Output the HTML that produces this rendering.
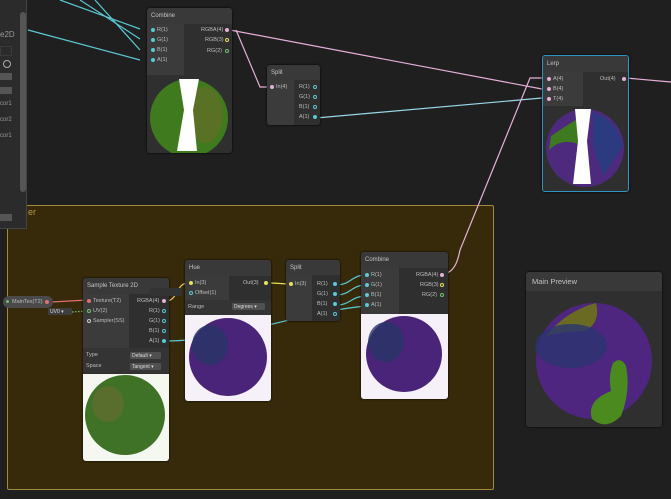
<!DOCTYPE html>
<html><head><meta charset="utf-8"><style>
*{margin:0;padding:0;box-sizing:border-box}
body{width:671px;height:499px;background:#1f1f1f;position:relative;overflow:hidden;font-family:"Liberation Sans",sans-serif;color:#c8c8c8;font-size:6px}
.a{position:absolute}
.node{position:absolute;background:#2f2f2f;border-radius:3px;overflow:hidden;box-shadow:0 0 2px #000}
.hd{position:absolute;left:0;right:0;top:0;background:#393939;color:#c4c4c4;font-size:6px;padding:5px 0 0 4px}
.lc{position:absolute;background:#3b3b3b}
.t{position:absolute;font-size:5.5px;color:#bdbdbd;white-space:nowrap}
.d{position:absolute;width:4px;height:4px;border-radius:50%}
.o{position:absolute;width:4px;height:4px;border-radius:50%;border:1px solid}
.dd{position:absolute;background:#505050;border-radius:1px;font-size:5px;color:#ddd;padding:1px 2px;height:7px}
</style></head><body>
<!-- group -->
<div class="a" style="left:7px;top:205px;width:487px;height:285px;background:#372a0a;border:1px solid #a08a3c;border-radius:2px"></div>
<div class="a" style="left:28px;top:207px;font-size:9px;color:#b89a3a">er</div>
<!-- left panel -->
<div class="a" style="left:0;top:0;width:27px;height:229px;background:#2b2b2b;border-right:1px solid #444;border-bottom:1px solid #444"></div>
<div class="a" style="left:20px;top:12px;width:6px;height:180px;background:#555;border-radius:3px"></div>
<div class="a" style="left:0;top:30px;font-size:8px;color:#999">e2D</div>
<div class="a" style="left:0;top:46px;width:12px;height:10px;border:1px solid #3a3a3a"></div>
<div class="a" style="left:3px;top:60px;width:8px;height:8px;border:1px solid #aaa;border-radius:50%"></div>
<div class="a" style="left:0;top:73px;width:12px;height:7px;background:#555"></div>
<div class="a" style="left:0;top:87px;width:12px;height:7px;background:#555"></div>
<div class="a" style="left:0;top:101px;font-size:6px;color:#999">cor1</div>
<div class="a" style="left:0;top:117px;font-size:6px;color:#999">cor2</div>
<div class="a" style="left:0;top:133px;font-size:6px;color:#999">cor1</div>
<div class="a" style="left:0;top:214px;width:12px;height:7px;background:#555"></div>

<svg class="a" style="left:0;top:0" width="671" height="499">
<g fill="none" stroke-width="1.2">
<path d="M60 0 L140 29" stroke="#5cc8d2"/>
<path d="M80 0 L140 39" stroke="#5cc8d2"/>
<path d="M95 0 L140 50" stroke="#5cc8d2"/>
<path d="M28 30 L140 60" stroke="#5cc8d2"/>
<path d="M230 30 L542 89" stroke="#e6b0d8"/>
<path d="M236 30 L260 87 L270 87" stroke="#e6b0d8"/>
<path d="M316 118 L542 98" stroke="#9ad6e8"/>
<path d="M447 273 C455 270 458 260 460 250 L530 78 L542 78" stroke="#e6b0d8"/>
<path d="M626 78 L671 82" stroke="#e6b0d8"/>
<path d="M52 302 L87 300" stroke="#e07070"/>
<path d="M72 312 L87 311" stroke="#6cc070" stroke-dasharray="1.5 1.5"/>
<path d="M166 301 C178 301 176 283 188 283" stroke="#e8c860"/>
<path d="M166 341 C230 341 300 312 366 306" stroke="#5cc8d2"/>
<path d="M268 283 C280 283 280 284 291 284" stroke="#e8e060"/>
<path d="M337 285 C350 285 352 275 366 275" stroke="#5cc8d2"/>
<path d="M337 295 C350 295 352 285 366 285" stroke="#5cc8d2"/>
<path d="M337 305 C350 305 352 296 366 296" stroke="#5cc8d2"/>
</g>
</svg>

<!-- Combine top -->
<div class="node" style="left:147px;top:8px;width:85px;height:145px">
<div class="hd" style="height:16px">Combine</div>
<div class="lc" style="left:0;top:16px;width:37px;height:51px"></div>
<div class="d" style="left:4px;top:20px;background:#5cc8d2"></div><div class="t" style="left:10px;top:19px">R(1)</div>
<div class="d" style="left:4px;top:30px;background:#5cc8d2"></div><div class="t" style="left:10px;top:29px">G(1)</div>
<div class="d" style="left:4px;top:40px;background:#5cc8d2"></div><div class="t" style="left:10px;top:39px">B(1)</div>
<div class="d" style="left:4px;top:50px;background:#5cc8d2"></div><div class="t" style="left:10px;top:49px">A(1)</div>
<div class="t" style="left:54px;top:19px">RGBA(4)</div><div class="d" style="left:78px;top:20px;background:#e6b0d8"></div>
<div class="t" style="left:58px;top:29px">RGB(3)</div><div class="o" style="left:78px;top:30px;border-color:#e8e060"></div>
<div class="t" style="left:60px;top:40px">RG(2)</div><div class="o" style="left:78px;top:41px;border-color:#6cc070"></div>
<svg class="a" style="left:0;top:67px" width="85" height="78"><circle cx="42" cy="43" r="39" fill="#3f7a1f"/><ellipse cx="58" cy="40" rx="18" ry="28" fill="#6a6a2a" opacity=".6"/><path d="M32 4 L52 4 L46 35 L50 76 L30 76 L37 35 Z" fill="#fff"/></svg>
</div>

<!-- Split top -->
<div class="node" style="left:267px;top:65px;width:53px;height:60px">
<div class="hd" style="height:15px">Split</div>
<div class="lc" style="left:0;top:15px;width:27px;height:45px"></div>
<div class="d" style="left:3px;top:20px;background:#e6b0d8"></div><div class="t" style="left:9px;top:19px">In(4)</div>
<div class="t" style="left:32px;top:19px">R(1)</div><div class="o" style="left:46px;top:20px;border-color:#5cc8d2"></div>
<div class="t" style="left:32px;top:29px">G(1)</div><div class="o" style="left:46px;top:30px;border-color:#5cc8d2"></div>
<div class="t" style="left:32px;top:39px">B(1)</div><div class="o" style="left:46px;top:40px;border-color:#5cc8d2"></div>
<div class="t" style="left:32px;top:49px">A(1)</div><div class="d" style="left:46px;top:50px;background:#5cc8d2"></div>
</div>

<!-- Lerp -->
<div class="node" style="left:542px;top:55px;width:87px;height:137px;border:1px solid #2d94c4">
<div class="hd" style="height:16px">Lerp</div>
<div class="lc" style="left:0;top:16px;width:40px;height:34px"></div>
<div class="d" style="left:4px;top:21px;background:#e6b0d8"></div><div class="t" style="left:10px;top:20px">A(4)</div>
<div class="d" style="left:4px;top:31px;background:#e6b0d8"></div><div class="t" style="left:10px;top:30px">B(4)</div>
<div class="d" style="left:4px;top:41px;background:#e6b0d8"></div><div class="t" style="left:10px;top:40px">T(4)</div>
<div class="t" style="left:57px;top:20px">Out(4)</div><div class="d" style="left:79px;top:21px;background:#e6b0d8"></div>
<svg class="a" style="left:0;top:50px" width="87" height="87"><circle cx="42" cy="42" r="39" fill="#4e2a7e"/><path d="M8 30 Q30 15 40 10 L40 40 Q20 30 6 44Z" fill="#3d7a20"/><path d="M50 6 Q75 15 80 40 L60 70 L50 40Z" fill="#2c3a80"/><path d="M32 3 L48 3 L44 35 L48 78 L30 78 L35 35Z" fill="#fff"/></svg>
</div>

<!-- MainTex pill -->
<div class="a" style="left:3px;top:296px;width:50px;height:12px;background:#4a4a4a;border-radius:6px"></div>
<div class="d" style="left:6px;top:300px;width:3px;height:3px;background:#6cc070"></div>
<div class="t" style="left:12px;top:299px">MainTex(T2)</div>
<div class="d" style="left:45px;top:300px;background:#e07070"></div>
<div class="dd" style="left:48px;top:308px;width:24px;background:#3e3e3e">UV0 ▾</div>

<!-- Sample Texture 2D -->
<div class="node" style="left:83px;top:278px;width:86px;height:183px">
<div class="hd" style="height:16px">Sample Texture 2D</div>
<div class="lc" style="left:0;top:16px;width:46px;height:54px"></div>
<div class="d" style="left:4px;top:21px;background:#e07070"></div><div class="t" style="left:10px;top:20px">Texture(T2)</div>
<div class="o" style="left:4px;top:31px;border-color:#6cc070"></div><div class="t" style="left:10px;top:30px">UV(2)</div>
<div class="o" style="left:4px;top:41px;border-color:#ccc"></div><div class="t" style="left:10px;top:40px">Sampler(SS)</div>
<div class="t" style="left:54px;top:20px">RGBA(4)</div><div class="d" style="left:79px;top:21px;background:#e6b0d8"></div>
<div class="t" style="left:66px;top:30px">R(1)</div><div class="o" style="left:79px;top:31px;border-color:#5cc8d2"></div>
<div class="t" style="left:66px;top:40px">G(1)</div><div class="o" style="left:79px;top:41px;border-color:#5cc8d2"></div>
<div class="t" style="left:66px;top:50px">B(1)</div><div class="o" style="left:79px;top:51px;border-color:#5cc8d2"></div>
<div class="t" style="left:66px;top:60px">A(1)</div><div class="d" style="left:79px;top:61px;background:#5cc8d2"></div>
<div class="a" style="left:0;top:70px;width:86px;height:25px;background:#343434"></div>
<div class="t" style="left:3px;top:74px">Type</div><div class="dd" style="left:47px;top:74px;width:31px">Default ▾</div>
<div class="t" style="left:3px;top:85px">Space</div><div class="dd" style="left:47px;top:85px;width:31px">Tangent ▾</div>
<svg class="a" style="left:0;top:96px" width="86" height="87"><rect width="86" height="87" fill="#f4f8f0"/><circle cx="42" cy="41" r="40" fill="#3f7226"/><ellipse cx="25" cy="30" rx="16" ry="18" fill="#6b6a30" opacity=".6"/></svg>
</div>

<!-- Hue -->
<div class="a" style="left:150px;top:288px;width:32px;height:8px;background:#333"></div>
<div class="node" style="left:185px;top:260px;width:86px;height:141px">
<div class="hd" style="height:16px">Hue</div>
<div class="lc" style="left:0;top:16px;width:44px;height:24px"></div>
<div class="d" style="left:4px;top:21px;background:#e8e060"></div><div class="t" style="left:10px;top:20px">In(3)</div>
<div class="o" style="left:4px;top:31px;border-color:#5cc8d2"></div><div class="t" style="left:10px;top:30px">Offset(1)</div>
<div class="t" style="left:58px;top:20px">Out(3)</div><div class="d" style="left:79px;top:21px;background:#e8e060"></div>
<div class="a" style="left:0;top:40px;width:86px;height:15px;background:#343434"></div>
<div class="t" style="left:3px;top:44px">Range</div><div class="dd" style="left:47px;top:43px;width:33px">Degrees ▾</div>
<svg class="a" style="left:0;top:55px" width="86" height="86"><rect width="86" height="86" fill="#f6f0f8"/><circle cx="43" cy="42" r="39" fill="#4a2478"/><ellipse cx="25" cy="30" rx="18" ry="20" fill="#283468" opacity=".8"/></svg>
</div>

<!-- Split bottom -->
<div class="node" style="left:286px;top:260px;width:54px;height:61px">
<div class="hd" style="height:15px">Split</div>
<div class="lc" style="left:0;top:15px;width:26px;height:46px"></div>
<div class="d" style="left:3px;top:22px;background:#e8e060"></div><div class="t" style="left:9px;top:21px">In(3)</div>
<div class="t" style="left:31px;top:21px">R(1)</div><div class="d" style="left:47px;top:22px;background:#5cc8d2"></div>
<div class="t" style="left:31px;top:31px">G(1)</div><div class="d" style="left:47px;top:32px;background:#5cc8d2"></div>
<div class="t" style="left:31px;top:41px">B(1)</div><div class="d" style="left:47px;top:42px;background:#5cc8d2"></div>
<div class="t" style="left:31px;top:51px">A(1)</div><div class="o" style="left:47px;top:52px;border-color:#5cc8d2"></div>
</div>

<!-- Combine bottom -->
<div class="node" style="left:361px;top:252px;width:87px;height:147px">
<div class="hd" style="height:16px">Combine</div>
<div class="lc" style="left:0;top:16px;width:38px;height:46px"></div>
<div class="d" style="left:4px;top:21px;background:#5cc8d2"></div><div class="t" style="left:10px;top:20px">R(1)</div>
<div class="d" style="left:4px;top:31px;background:#5cc8d2"></div><div class="t" style="left:10px;top:30px">G(1)</div>
<div class="d" style="left:4px;top:41px;background:#5cc8d2"></div><div class="t" style="left:10px;top:40px">B(1)</div>
<div class="d" style="left:4px;top:51px;background:#5cc8d2"></div><div class="t" style="left:10px;top:50px">A(1)</div>
<div class="t" style="left:55px;top:20px">RGBA(4)</div><div class="d" style="left:79px;top:21px;background:#e6b0d8"></div>
<div class="t" style="left:59px;top:30px">RGB(3)</div><div class="o" style="left:79px;top:31px;border-color:#e8e060"></div>
<div class="t" style="left:61px;top:40px">RG(2)</div><div class="o" style="left:79px;top:41px;border-color:#6cc070"></div>
<svg class="a" style="left:0;top:62px" width="87" height="85"><rect width="87" height="85" fill="#f6f0f8"/><circle cx="43" cy="40" r="38" fill="#4a2478"/><ellipse cx="25" cy="28" rx="18" ry="20" fill="#283468" opacity=".8"/></svg>
</div>

<!-- Main Preview -->
<div class="node" style="left:526px;top:272px;width:136px;height:155px;background:#2f2f2f">
<div class="a" style="left:0;top:0;width:136px;height:19px;background:#393939;color:#c4c4c4;font-size:7.5px;padding:5px 0 0 6px">Main Preview</div>
<svg class="a" style="left:0;top:19px" width="136" height="136"><circle cx="68" cy="70" r="58" fill="#4e2680"/><path d="M20 45 Q40 20 70 12 Q75 30 60 40 Q40 40 20 45Z" fill="#6a6a22"/><ellipse cx="45" cy="55" rx="36" ry="22" fill="#2a3470" opacity=".8"/><path d="M87 72 Q95 65 100 75 Q105 100 95 125 Q80 140 66 128 Q60 110 85 100 Q82 85 87 72Z" fill="#4b8a1e"/></svg>
</div>
</body></html>
